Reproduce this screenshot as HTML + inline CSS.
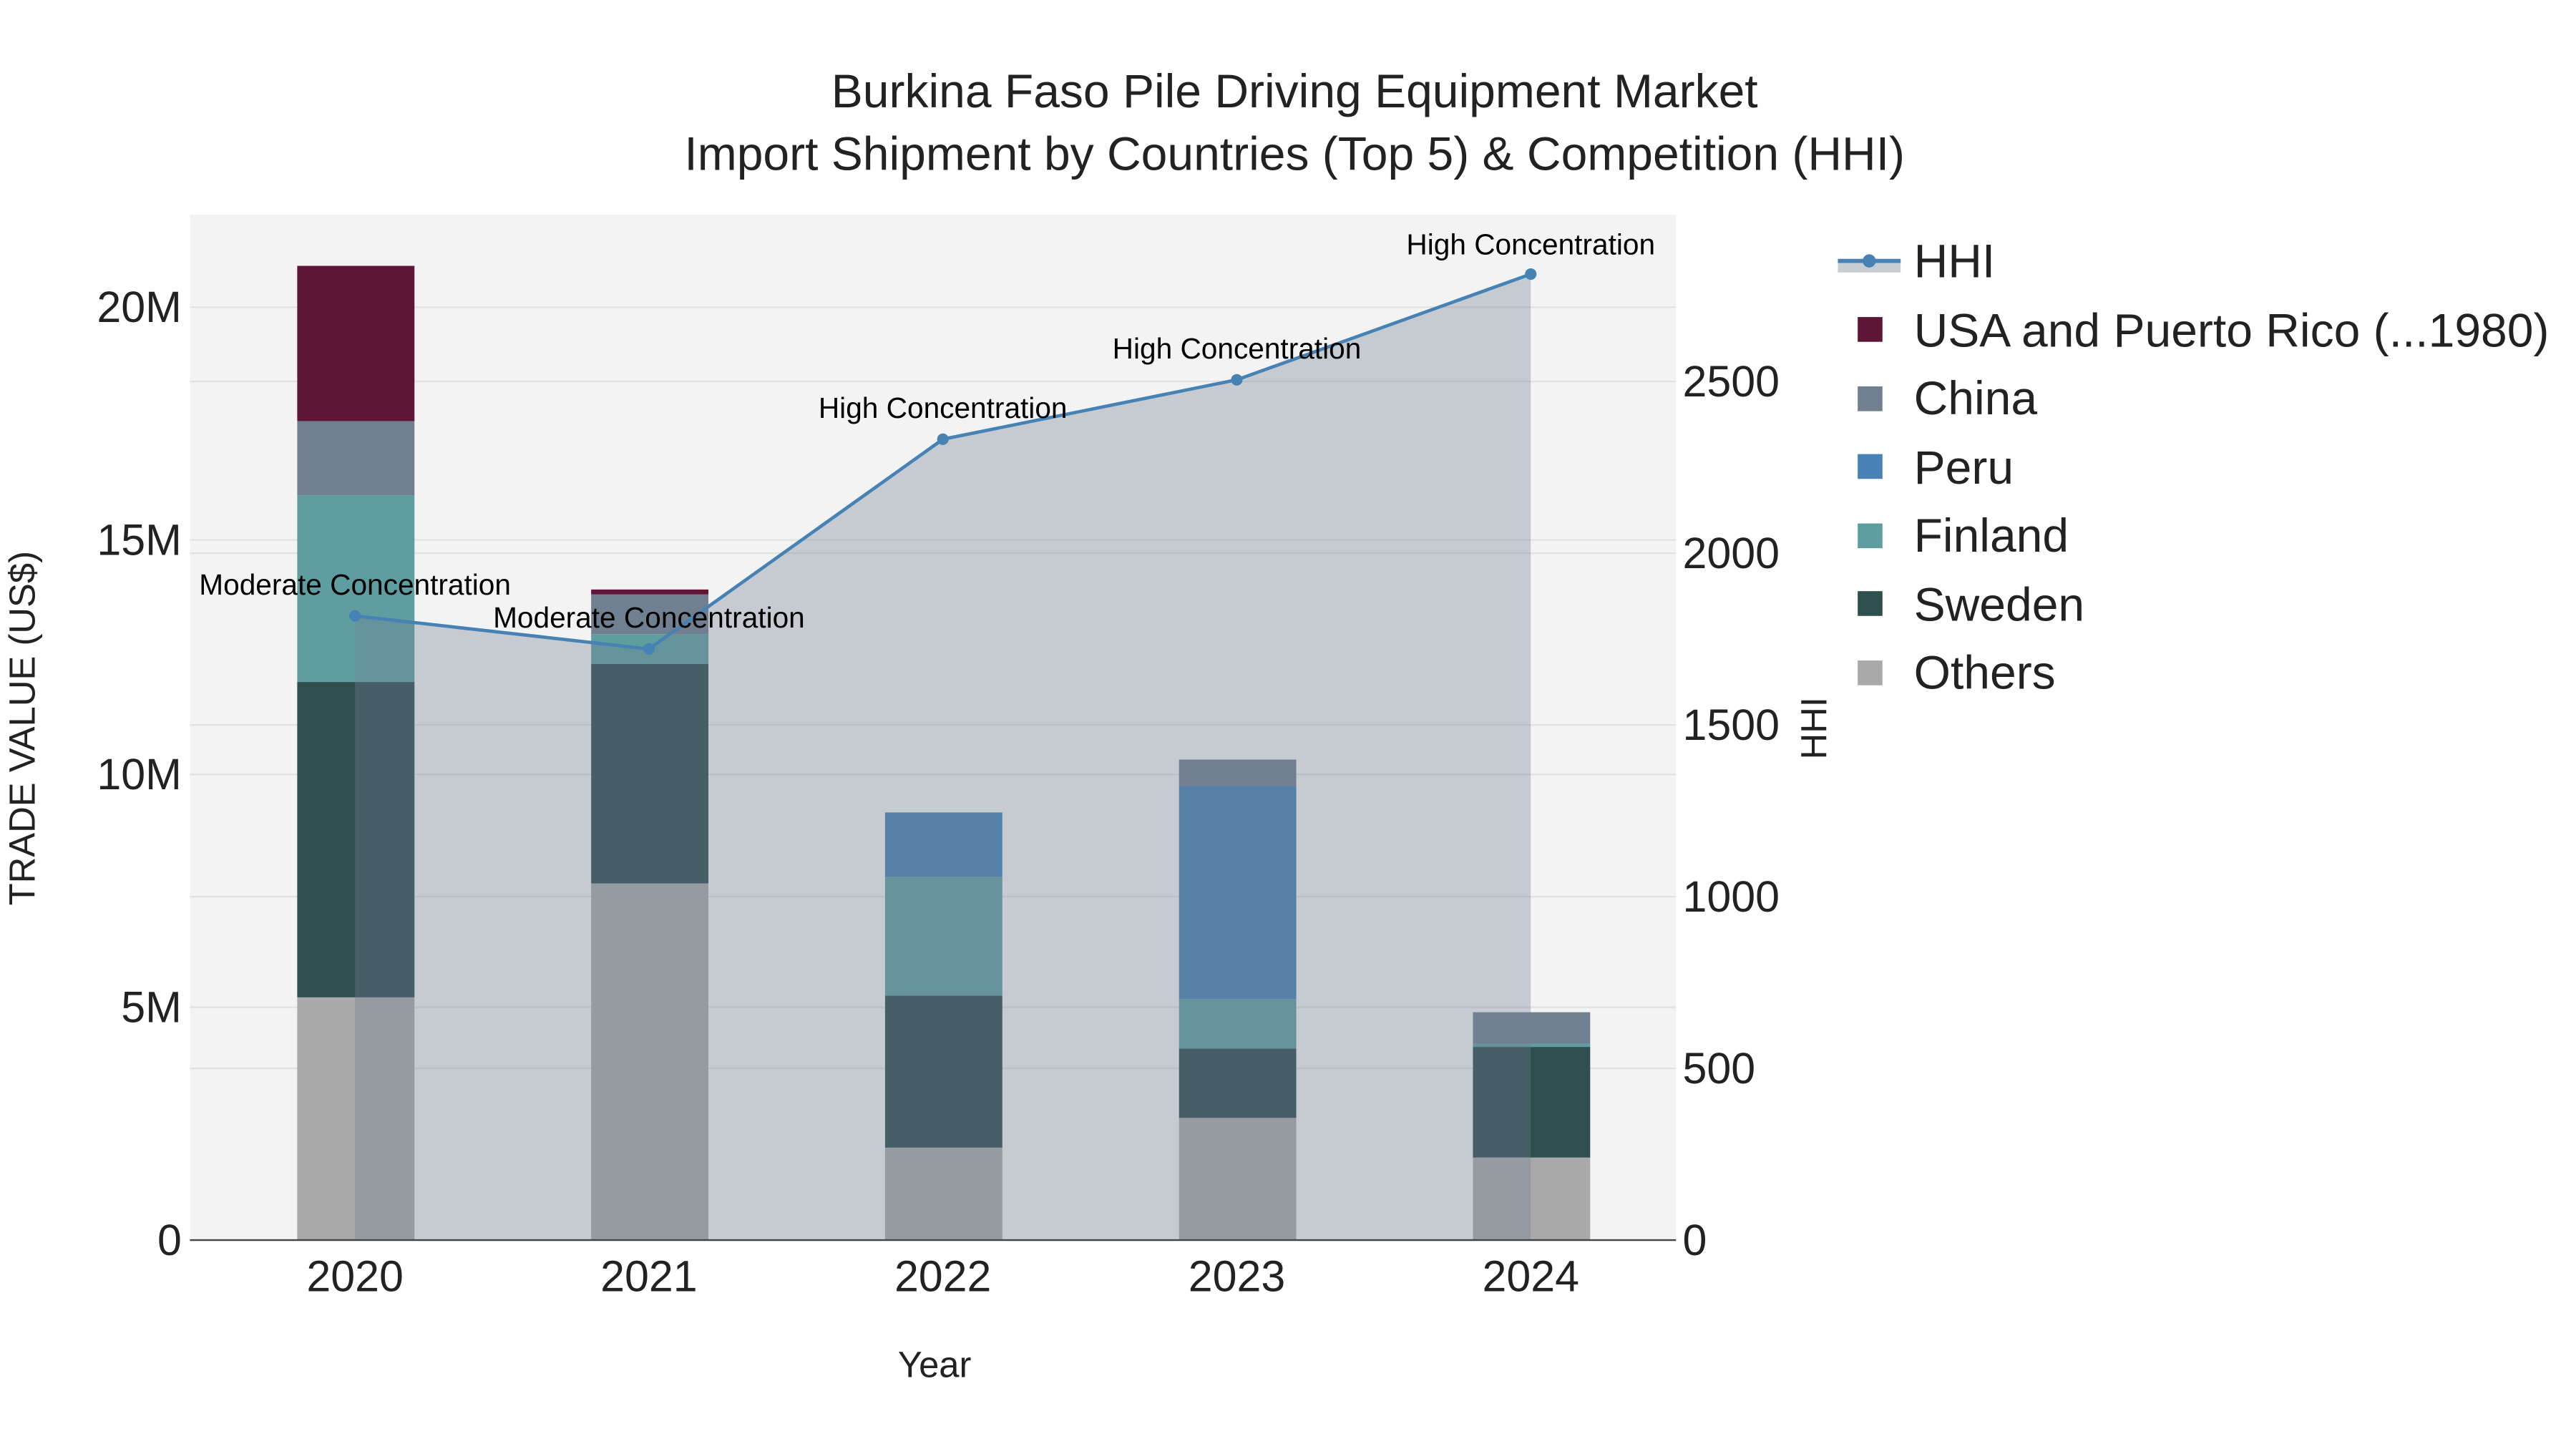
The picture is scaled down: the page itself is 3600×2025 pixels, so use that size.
<!DOCTYPE html>
<html><head><meta charset="utf-8"><style>html,body{margin:0;padding:0;background:#fff}svg{display:block}</style></head>
<body>
<svg width="3600" height="2025" viewBox="0 0 1560 877.5" xmlns="http://www.w3.org/2000/svg" font-family="Liberation Sans, sans-serif">
<rect width="1560" height="877.5" fill="#fff"/>
<rect x="115" y="130" width="900" height="621" fill="#f3f3f3"/>
<g stroke="#e2e2e2" stroke-width="1">
<line x1="115" x2="1015" y1="186" y2="186"/><line x1="115" x2="1015" y1="327" y2="327"/><line x1="115" x2="1015" y1="469" y2="469"/><line x1="115" x2="1015" y1="610" y2="610"/>
<line x1="115" x2="1015" y1="231" y2="231"/><line x1="115" x2="1015" y1="335" y2="335"/><line x1="115" x2="1015" y1="439" y2="439"/><line x1="115" x2="1015" y1="543" y2="543"/><line x1="115" x2="1015" y1="647" y2="647"/>
</g>
<rect x="180" y="604" width="71" height="147" fill="#a9a9a9"/>
<rect x="180" y="413" width="71" height="191" fill="#2f4f4f"/>
<rect x="180" y="300" width="71" height="113" fill="#5f9ea0"/>
<rect x="180" y="255" width="71" height="45" fill="#708090"/>
<rect x="180" y="161" width="71" height="94" fill="#5f1535"/>
<rect x="358" y="535" width="71" height="216" fill="#a9a9a9"/>
<rect x="358" y="402" width="71" height="133" fill="#2f4f4f"/>
<rect x="358" y="384" width="71" height="18" fill="#5f9ea0"/>
<rect x="358" y="360" width="71" height="24" fill="#708090"/>
<rect x="358" y="357" width="71" height="3" fill="#5f1535"/>
<rect x="536" y="695" width="71" height="56" fill="#a9a9a9"/>
<rect x="536" y="603" width="71" height="92" fill="#2f4f4f"/>
<rect x="536" y="531" width="71" height="72" fill="#5f9ea0"/>
<rect x="536" y="492" width="71" height="39" fill="#4682b4"/>
<rect x="714" y="677" width="71" height="74" fill="#a9a9a9"/>
<rect x="714" y="635" width="71" height="42" fill="#2f4f4f"/>
<rect x="714" y="605" width="71" height="30" fill="#5f9ea0"/>
<rect x="714" y="476" width="71" height="129" fill="#4682b4"/>
<rect x="714" y="460" width="71" height="16" fill="#708090"/>
<rect x="892" y="701" width="71" height="50" fill="#a9a9a9"/>
<rect x="892" y="634" width="71" height="67" fill="#2f4f4f"/>
<rect x="892" y="632" width="71" height="2" fill="#5f9ea0"/>
<rect x="892" y="613" width="71" height="19" fill="#708090"/>
<polygon points="215,751 215,373 393,393 571,266 749,230 927,166 927,751" fill="rgb(116,125,145)" fill-opacity="0.35"/>
<polyline points="215,373 393,393 571,266 749,230 927,166" fill="none" stroke="#4682b4" stroke-width="2"/>
<g fill="#4682b4"><circle cx="215" cy="373" r="3.5"/><circle cx="393" cy="393" r="3.5"/><circle cx="571" cy="266" r="3.5"/><circle cx="749" cy="230" r="3.5"/><circle cx="927" cy="166" r="3.5"/></g>
<line x1="115" x2="1015" y1="751" y2="751" stroke="#444" stroke-width="1"/>
<g font-size="17.6" fill="#000" text-anchor="middle">
<text x="215" y="360">Moderate Concentration</text>
<text x="393" y="380">Moderate Concentration</text>
<text x="571" y="253">High Concentration</text>
<text x="749" y="217">High Concentration</text>
<text x="927" y="154">High Concentration</text>
</g>
<g font-size="26.4" fill="#222" text-anchor="end">
<text x="110" y="195">20M</text><text x="110" y="336">15M</text><text x="110" y="478">10M</text><text x="110" y="619">5M</text><text x="110" y="760">0</text>
</g>
<g font-size="26.4" fill="#222" text-anchor="start">
<text x="1019" y="240">2500</text><text x="1019" y="344">2000</text><text x="1019" y="448">1500</text><text x="1019" y="552">1000</text><text x="1019" y="656">500</text><text x="1019" y="760">0</text>
</g>
<g font-size="26.4" fill="#222" text-anchor="middle">
<text x="215" y="782">2020</text><text x="393" y="782">2021</text><text x="571" y="782">2022</text><text x="749" y="782">2023</text><text x="927" y="782">2024</text>
</g>
<text x="566" y="834" font-size="22" fill="#222" text-anchor="middle">Year</text>
<text transform="translate(21,441) rotate(-90)" font-size="22" fill="#222" text-anchor="middle">TRADE VALUE (US$)</text>
<text transform="translate(1106,441) rotate(-90)" font-size="22" fill="#222" text-anchor="middle">HHI</text>
<g font-size="28.6" fill="#222" text-anchor="middle">
<text x="784" y="65">Burkina Faso Pile Driving Equipment Market</text>
<text x="784" y="103">Import Shipment by Countries (Top 5) &amp; Competition (HHI)</text>
</g>
<rect x="1113" y="158" width="38" height="7" fill="#c8ccd3"/>
<line x1="1113" x2="1151" y1="158" y2="158" stroke="#4682b4" stroke-width="2.5"/>
<circle cx="1132" cy="158" r="4" fill="#4682b4"/>
<rect x="1125" y="192" width="15" height="15" fill="#5f1535"/>
<rect x="1125" y="234" width="15" height="15" fill="#708090"/>
<rect x="1125" y="275" width="15" height="15" fill="#4682b4"/>
<rect x="1125" y="317" width="15" height="15" fill="#5f9ea0"/>
<rect x="1125" y="358" width="15" height="15" fill="#2f4f4f"/>
<rect x="1125" y="400" width="15" height="15" fill="#a9a9a9"/>
<g font-size="28.6" fill="#222">
<text x="1159" y="168">HHI</text>
<text x="1159" y="210">USA and Puerto Rico (...1980)</text>
<text x="1159" y="251">China</text>
<text x="1159" y="293">Peru</text>
<text x="1159" y="334">Finland</text>
<text x="1159" y="376">Sweden</text>
<text x="1159" y="417">Others</text>
</g>
</svg>
</body></html>
